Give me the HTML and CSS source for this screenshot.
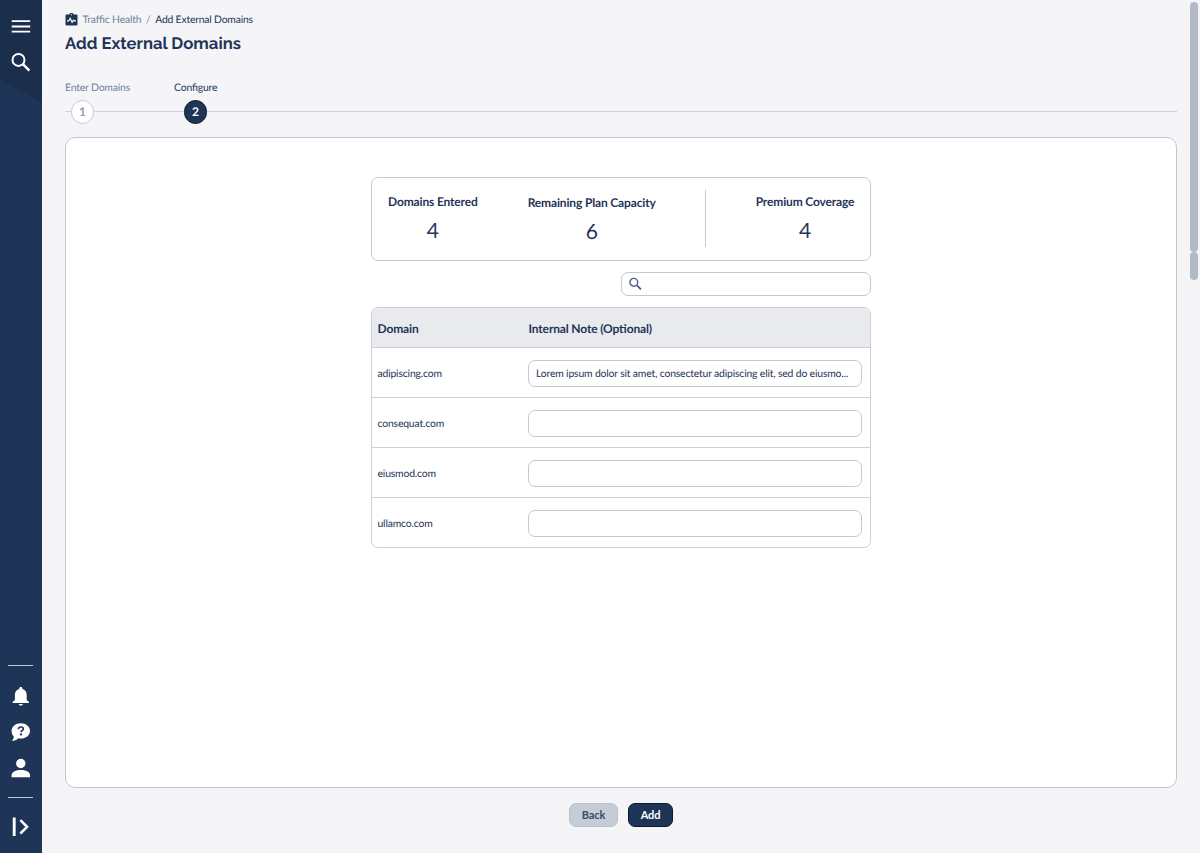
FILE: index.html
```html
<!DOCTYPE html>
<html lang="en">
<head>
<meta charset="utf-8">
<title>Add External Domains</title>
<link rel="stylesheet" href="styles.css">
</head>
<body>
<nav class="sidebar">
  <svg class="slope" viewBox="0 0 42 103" width="42" height="103"><path d="M0 0h42v102.500L0 80z" fill="#1b2f4d"/></svg>
  <div class="nav-top">
    <svg width="20" height="14" viewBox="0 0 20 14"><path d="M.7 2.200h18.500M.7 7.500h18.500M.7 12.700h18.500" stroke="#fff" stroke-width="1.800"/></svg>
    <svg width="20" height="20" viewBox="0 0 20 20" fill="none" stroke="#fff"><circle cx="7.500" cy="7.900" r="6" stroke-width="2"/><path d="M11.900 12.200l6.500 6.500" stroke-width="2.500"/></svg>
  </div>
  <div class="nav-bottom">
    <hr class="rule">
    <svg class="bell" width="18" height="20" viewBox="0 0 18 20" fill="#fff"><path transform="translate(-.2 .6)" d="M9 .5c1 0 1.600.7 1.600 1.500v.5c2.600.7 4.300 2.900 4.300 5.700v5.200l2.300 2.100v.9H.8v-.9l2.300-2.100V8.200c0-2.800 1.700-5 4.300-5.700V2C7.400 1.200 8 .5 9 .5zM7 17.300h4c0 1-.9 1.700-2 1.700s-2-.7-2-1.700z"/></svg>
    <svg class="help" width="20" height="20" viewBox="0 0 20 20"><g transform="translate(-.2 .4)"><path d="M10 .9c5.100 0 9.200 3.400 9.200 7.600s-4.100 7.700-9.200 7.700c-.9 0-1.700-.1-2.500-.3-1.600 1.700-4 2.600-6.300 2.700 1-1.200 1.700-2.600 1.800-4.400C1.700 12.900.8 10.900.8 8.500.8 4.300 4.900.9 10 .9z" fill="#fff"/><path d="M7.600 6.800c.1-1.500 1.100-2.200 2.500-2.200s2.400.7 2.400 1.900c0 1.700-2.300 1.700-2.300 3.300" fill="none" stroke="#1f3558" stroke-width="1.700"/><circle cx="10.200" cy="12" r="1.100" fill="#1f3558"/></g></svg>
    <svg class="user" width="20" height="20" viewBox="0 0 20 20" fill="#fff"><circle cx="9.800" cy="5.500" r="4.700"/><path d="M.6 19.200v-2.100c0-3.100 4.600-5 9.200-5s9.200 1.900 9.200 5v2.100z"/></svg>
    <hr class="rule">
    <svg class="expand" width="20" height="20" viewBox="0 0 20 20" fill="none" stroke="#fff"><path d="M3.200 .5v18.500" stroke-width="2.900"/><path d="M9.400 3.100l6.700 6.700-6.700 6.700" stroke-width="2.500"/></svg>
  </div>
</nav>
<main class="page">
  <div class="crumbs">
    <svg width="13" height="13" viewBox="0 0 13 13"><path d="M1.500 1.500H4.300a2.300 2.300 0 0 1 4.400 0h2.800a1 1 0 0 1 1 1v9a1 1 0 0 1-1 1h-10a1 1 0 0 1-1-1v-9a1 1 0 0 1 1-1z" fill="#1f3558"/><circle cx="6.500" cy="1.800" r=".6" fill="#fff"/><path d="M2 7.900h1.700l1.500-2.700 1.900 4 1.200-2.100.8.800H11" fill="none" stroke="#fff" stroke-width="1.100"/></svg>
    <span class="crumb-parent">Traffic Health</span><span class="crumb-sep">/</span><span class="crumb-here">Add External Domains</span>
  </div>
  <h1 class="title">Add External Domains</h1>
  <ol class="steps">
    <li class="step step-one"><span class="step-label">Enter Domains</span><span class="dot">1</span></li>
    <li class="step step-two"><span class="step-label">Configure</span><span class="dot">2</span></li>
  </ol>
  <section class="panel">
    <div class="content">
      <div class="summary">
        <div class="stat"><span class="stat-name">Domains Entered</span><span class="stat-value">4</span></div>
        <div class="stat stat-plan"><span class="stat-name">Remaining Plan Capacity</span><span class="stat-value">6</span></div>
        <div class="divider"></div>
        <div class="stat"><span class="stat-name">Premium Coverage</span><span class="stat-value">4</span></div>
      </div>
      <div class="search"><svg width="14" height="14" viewBox="0 0 14 14" fill="none" stroke="#4a5f7e"><circle cx="4.800" cy="5.300" r="3.900" stroke-width="1.400"/><path d="M7.700 8.200l4.200 4.200" stroke-width="1.800"/></svg></div>
      <div class="table">
        <div class="row head"><span>Domain</span><span>Internal Note (Optional)</span></div>
        <div class="row"><span>adipiscing.com</span><div class="note">Lorem ipsum dolor sit amet, consectetur adipiscing elit, sed do eiusmo...</div></div>
        <div class="row"><span>consequat.com</span><div class="note"></div></div>
        <div class="row"><span>eiusmod.com</span><div class="note"></div></div>
        <div class="row"><span>ullamco.com</span><div class="note"></div></div>
      </div>
    </div>
  </section>
  <div class="actions"><button class="btn back">Back</button><button class="btn add">Add</button></div>
</main>
<div class="scroll"><div class="thumb thumb-long"></div><div class="thumb thumb-short"></div></div>
</body>
</html>
```
FILE: styles.css
```css
* { box-sizing: border-box; }
body {
  margin: 0;
  height: 853px;
  display: flex;
  overflow: hidden;
  background: #f5f5f8;
  color: #1f3558;
  font-family: Lato, "Open Sans", sans-serif;
  font-size: 10.4px;
  letter-spacing: -.17px;
  font-feature-settings: "liga" 1;
  text-rendering: geometricPrecision;
}
svg { display: block; flex: none; }

.sidebar {
  position: relative;
  width: 42px;
  flex: none;
  display: flex;
  flex-direction: column;
  justify-content: space-between;
  background: #1f3558;
}
.slope { position: absolute; left: 0; top: 0; }
.nav-top, .nav-bottom { position: relative; display: flex; flex-direction: column; align-items: center; }
.nav-top { padding: 19px 0 0; gap: 19px; }
.nav-bottom { padding: 0 1px 16px 0; }
.rule { width: 25px; height: 1px; margin: 0; border: 0; background: #c3cad5; }
.bell { margin-top: 20px; }
.help { margin-top: 16px; }
.user { margin: 16px 0 19px; }
.expand { margin-top: 19px; }

.page { flex: 1; padding: 12px 0 0 23px; display: flex; flex-direction: column; }
.crumbs { display: flex; align-items: center; height: 15px; }
.crumb-parent, .crumb-sep { color: #71819a; }
.crumb-parent { margin-left: 4.500px; }
.crumb-sep { margin: 0 4.600px; }
.crumb-here { letter-spacing: -.2px; }
.title {
  margin: 5px 0 0;
  height: 22px;
  font: 700 16.65px/22px Raleway, Lato, sans-serif;
  letter-spacing: 0;
}
.steps {
  width: 1112px;
  height: 51px;
  margin: 27px 0 0;
  padding: 0;
  display: flex;
  list-style: none;
  background: linear-gradient(#cdd3dc, #cdd3dc) 0 30px / 100% 1px no-repeat;
}
.step { display: flex; flex-direction: column; gap: 5px; }
.step-one { width: 109px; color: #71819a; }
.step-label { height: 14px; line-height: 15px; white-space: nowrap; }
.dot {
  width: 23.500px;
  height: 23.500px;
  margin-left: 5.700px;
  border: 1px solid #c2c8d3;
  border-radius: 50%;
  background: #fff;
  color: #929db0;
  font: 700 12px/21.5px Lato, sans-serif;
  text-align: center;
}
.step-two .dot { margin-left: 9.700px; background: #1f3558; border-color: #0c1728; color: #fff; }

.panel {
  width: 1112px;
  height: 651px;
  margin-top: 5px;
  padding-top: 39px;
  border: 1px solid #bfc7d2;
  border-radius: 10px;
  background: #fff;
}
.content { width: 500px; margin: 0 auto; }
.summary {
  height: 84px;
  display: flex;
  padding: 12px 16px 0;
  border: 1px solid #c2c8d4;
  border-radius: 7px;
  letter-spacing: -.15px;
}
.stat { display: flex; flex-direction: column; align-items: center; white-space: nowrap; }
.stat-plan { margin: 1px 49px 0 50px; }
.stat-name { height: 24px; font-size: 12px; font-weight: 700; line-height: 24px; }
.stat-value { margin-top: 4px; font-size: 21px; line-height: 26px; }
.divider { flex: none; width: 1px; height: 57px; margin-right: 50px; background: #c2c8d4; }
.search {
  width: 250px;
  height: 24px;
  margin: 11px 0 0 auto;
  padding: 4px 7px;
  border: 1px solid #c2c8d4;
  border-radius: 7px;
}
.table {
  margin-top: 11px;
  border: 1px solid #cbd0da;
  border-radius: 7px;
  overflow: hidden;
}
.row {
  height: 50px;
  display: grid;
  grid-template-columns: 151px 333px;
  align-items: center;
  padding-left: 5.500px;
  border-bottom: 1px solid #cbd0da;
}
.row:last-child { height: 49px; border-bottom: 0; }
.row > span { padding-top: 2px; }
.head { height: 40px; background: #e8eaee; font-size: 12px; font-weight: 700; letter-spacing: -.15px; }
.head > span { padding-top: 1px; }
.note {
  height: 27px;
  margin: 1px 0 0 -.5px;
  padding: 0 7px;
  border: 1px solid #c2c8d4;
  border-radius: 7px;
  line-height: 26px;
  white-space: nowrap;
}
.actions { width: 1112px; display: flex; justify-content: center; gap: 10px; margin-top: 15px; }
.btn {
  height: 24px;
  padding: 0;
  border: 1px solid #bbc1cd;
  border-radius: 7px;
  font: 700 11px/22px Lato, sans-serif;
  letter-spacing: -.1px;
}
.back { width: 49px; background: #c6ccd6; color: #354a6c; }
.add { width: 45px; background: #1f3558; border-color: #0c1728; color: #fff; }

.scroll { width: 10px; flex: none; padding-top: 2px; }
.thumb { width: 8px; border-radius: 4px; background: #b1bac6; }
.thumb-long { height: 250px; }
.thumb-short { height: 28px; }
```
